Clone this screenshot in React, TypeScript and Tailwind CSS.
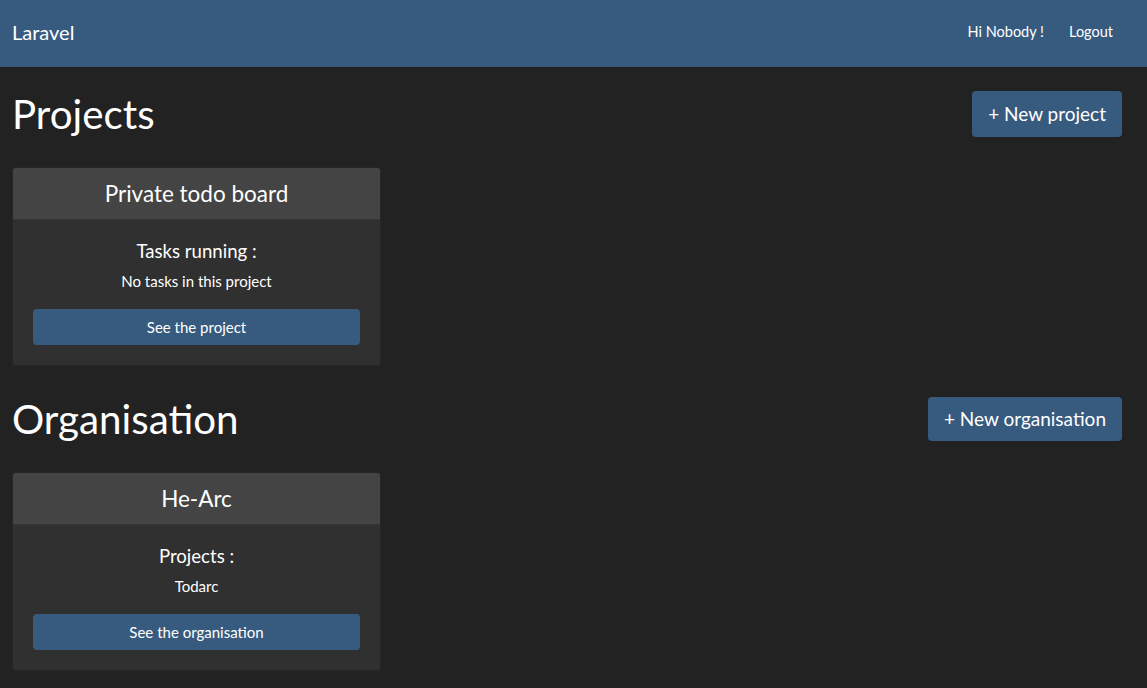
import React from 'react'

const font = { fontFamily: 'Lato, "Open Sans", Arial, sans-serif' }

function Card({ title, label, line, action }: { title: string; label: string; line: string; action: string }) {
  return (
    <div className="w-[369px] rounded bg-[#303030] border border-black/20 overflow-hidden">
      <div className="h-[52px] bg-[#444444] border-b border-black/20 flex items-center justify-center">
        <h4 className="text-[22.5px] text-white">{title}</h4>
      </div>
      <div className="px-5 pt-5 pb-5 flex flex-col items-center">
        <h5 className="text-[18.6px] leading-[23px] text-white">{label}</h5>
        <p className="mt-[7px] text-[15px] leading-[22px] text-white">{line}</p>
        <button className="mt-[17px] w-full h-9 rounded bg-[#375a7f] text-white text-[15px]">{action}</button>
      </div>
    </div>
  )
}

export default function App() {
  return (
    <div className="min-h-screen bg-[#222222] text-white" style={font}>
      <nav className="h-[67px] bg-[#375a7f] flex items-center justify-between pl-3 pr-[34px] pb-[4px]">
        <span className="text-[20px] leading-6">Laravel</span>
        <div className="flex items-center gap-[25px] text-[14.5px] leading-5 pt-[1px]">
          <span>Hi Nobody !</span>
          <span>Logout</span>
        </div>
      </nav>

      <main className="pl-3 pr-[25px] pt-6">
        {/* Projects */}
        <div className="flex items-center justify-between h-[46px]">
          <h1 className="text-[40.3px] leading-none">Projects</h1>
          <button className="h-[46px] px-4 rounded bg-[#375a7f] text-[19px]">+ New project</button>
        </div>
        <div className="mt-[30px]">
          <Card title="Private todo board" label="Tasks running :" line="No tasks in this project" action="See the project" />
        </div>

        {/* Organisation */}
        <div className="mt-[31px] flex items-center justify-between h-[44px]">
          <h1 className="text-[40.3px] leading-none">Organisation</h1>
          <button className="h-[44px] px-4 rounded bg-[#375a7f] text-[19px]">+ New organisation</button>
        </div>
        <div className="mt-[31px] pb-4">
          <Card title="He-Arc" label="Projects :" line="Todarc" action="See the organisation" />
        </div>
      </main>
    </div>
  )
}
